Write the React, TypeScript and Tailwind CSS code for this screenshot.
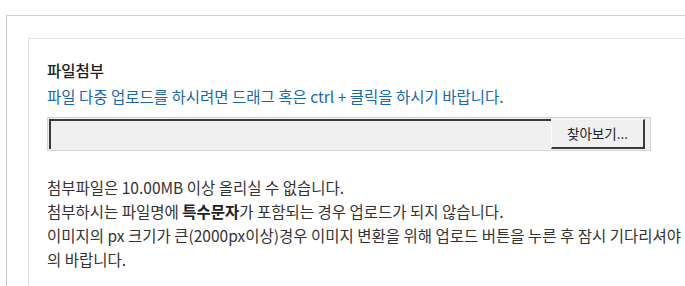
export default function App() {
  return (
    <div
      className="w-[685px] h-[286px] overflow-hidden bg-white pt-[15px] pl-[6px] text-[15.5px] text-[#333]"
      style={{ fontFamily: '"Noto Sans CJK KR", "Noto Sans", sans-serif' }}
    >
      <div className="w-[760px] h-[300px] border-t border-l border-[#cfcfcf] pt-[22px] pl-[21px]">
        <div className="h-[300px] border-t border-l border-[#e2e2e2] pt-[20px] pl-[18px]">
          <div className="font-medium text-[#222] leading-[22px]">파일첨부</div>
          <div className="text-[#1a66b3] leading-[22px] mt-[4px]">
            파일 다중 업로드를 하시려면 드래그 혹은 ctrl + 클릭을 하시기 바랍니다.
          </div>

          {/* file input */}
          <div className="mt-[10px] w-[604px] h-[34px] border border-[#d4d4d4] bg-[#f0f0f0] flex p-[1px]">
            <div className="flex-1 border-t-2 border-l-2 border-[#3a3a3a] bg-[#f0f0f0]"></div>
            <div className="w-[94px] mr-[4px] flex items-center justify-center bg-[#f0f0f0] border border-[#fafafa] border-r-2 border-b-2 border-r-[#3a3a3a] border-b-[#3a3a3a] text-[13.5px] text-[#222]">
              찾아보기...
            </div>
          </div>

          <div className="mt-[24px] leading-[24px] whitespace-nowrap">
            <div>첨부파일은 10.00MB 이상 올리실 수 없습니다.</div>
            <div>
              첨부하시는 파일명에 <b className="font-bold text-[#222]">특수문자</b>가 포함되는 경우 업로드가 되지 않습니다.
            </div>
            <div>이미지의 px 크기가 큰(2000px이상)경우 이미지 변환을 위해 업로드 버튼을 누른 후 잠시 기다리셔야 합니다. 주</div>
            <div>의 바랍니다.</div>
          </div>
        </div>
      </div>
    </div>
  );
}
